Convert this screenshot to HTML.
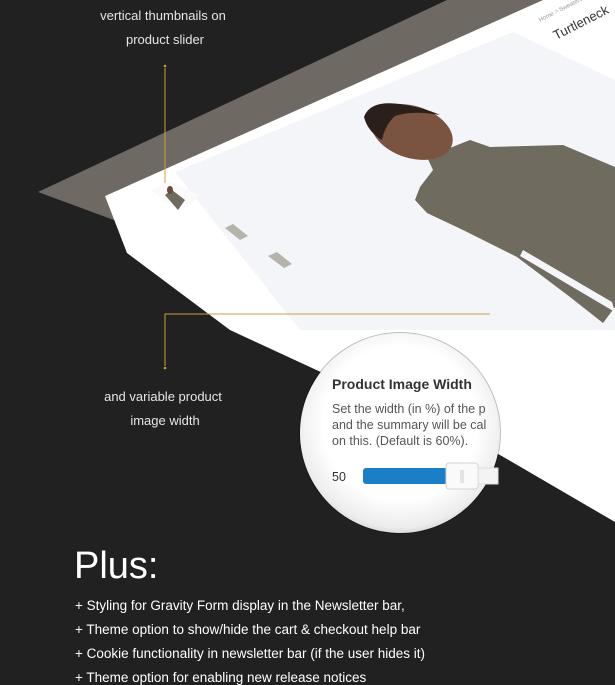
<!DOCTYPE html>
<html><head><style>
body{margin:0;width:615px;height:675px;overflow:hidden;background:#212121;font-family:"Liberation Sans",sans-serif;position:relative}
.t{position:absolute;color:#e6e6e6;font-size:13px;text-align:center;width:200px;line-height:24px}
.l{position:absolute;left:75px;color:#fff;font-size:13.5px;white-space:nowrap}
</style></head><body>
<svg width="615" height="675" style="position:absolute;left:0;top:0">
<defs>
<radialGradient id="mg" cx="0.5" cy="0.45" r="0.55"><stop offset="0.7" stop-color="#fff"/><stop offset="0.95" stop-color="#ececec"/><stop offset="1" stop-color="#dcdcdc"/></radialGradient>
</defs>
<polygon points="447,0 543,0 105,196 160,237 38,192" fill="#6e6a63"/>
<polygon points="105,196 543,0 615,0 615,522 500,455 230,330 127,253" fill="#fff"/>
<polygon points="175,172 513,32 615,80 615,330 300,330" fill="#f4f5f8"/>
<text x="556" y="40" font-size="13" fill="#333" transform="rotate(-27 556 40)">Turtleneck</text>
<text x="540" y="22" font-size="6" fill="#999" transform="rotate(-27 540 22)">Home &gt; Sweaters</text>
<!-- person -->
<polygon points="427,157 470,140 490,147 563,145 615,167 615,307 603,323 570,297 517,257 463,230 427,213 415,200 420,187 433,170" fill="#6f6b5e"/>
<polygon points="523,250 612,302 615,312 603,305 520,256" fill="#f4f5f8"/>
<ellipse cx="412" cy="132" rx="42" ry="26" transform="rotate(18 412 132)" fill="#7a5440"/>
<path d="M364 117 Q370 100 400 104 Q425 108 440 115 Q412 110 395 116 Q385 125 382 140 Q368 132 364 117Z" fill="#2a1f1a"/>
<!-- thumbnails -->
<polygon points="150,190 170,182 200,195 180,212" fill="#fafafa"/>
<polygon points="165,195 172,190 185,200 178,210" fill="#6f6b5e"/>
<ellipse cx="170" cy="190" rx="3" ry="4" fill="#6b4a38"/>
<polygon points="225,228 233,224 248,236 240,240" fill="#b5b4ac"/>
<polygon points="268,256 277,252 292,264 284,268" fill="#b5b4ac"/>
<!-- gold lines -->
<line x1="165" y1="68" x2="165" y2="183" stroke="#c9a13a" stroke-width="1"/>
<circle cx="165" cy="66" r="1.3" fill="#c9a13a"/>
<polyline points="490,314 165,314 165,366" fill="none" stroke="#c9a13a" stroke-width="1"/>
<circle cx="165" cy="368" r="1.3" fill="#c9a13a"/>
<!-- magnifier -->
<circle cx="400" cy="433" r="101" fill="#000" opacity=".25"/>
<circle cx="400" cy="433" r="100" fill="url(#mg)"/>
<text x="332" y="389" font-size="14" font-weight="bold" fill="#333">Product Image Width</text>
<g font-size="12.5" fill="#555">
<text x="332" y="413">Set the width (in %) of the p</text>
<text x="332" y="429">and the summary will be cal</text>
<text x="332" y="445">on this. (Default is 60%).</text>
<text x="332" y="481" fill="#333">50</text>
</g>
<rect x="363" y="468" width="90" height="16" rx="3" fill="#1a7fc6"/>
<rect x="446" y="463" width="32" height="26" rx="3" fill="#fafafa" stroke="#d4d4d4"/>
<line x1="461" y1="470" x2="461" y2="483" stroke="#ccc"/><line x1="463" y1="470" x2="463" y2="483" stroke="#ccc"/>
<rect x="478" y="468" width="20" height="16" fill="#f3f3f3" stroke="#ddd"/>
</svg>
<div class="t" style="left:63px;top:4px">vertical thumbnails on</div>
<div class="t" style="left:65px;top:28px">product slider</div>
<div class="t" style="left:63px;top:385px">and variable product</div>
<div class="t" style="left:65px;top:409px">image width</div>
<div style="position:absolute;left:74px;top:545px;color:#fff;font-size:38px;font-weight:300">Plus:</div>
<div class="l" style="top:598px">+ Styling for Gravity Form display in the Newsletter bar,</div>
<div class="l" style="top:622px">+ Theme option to show/hide the cart &amp; checkout help bar</div>
<div class="l" style="top:646px">+ Cookie functionality in newsletter bar (if the user hides it)</div>
<div class="l" style="top:670px">+ Theme option for enabling new release notices</div>
</body></html>
